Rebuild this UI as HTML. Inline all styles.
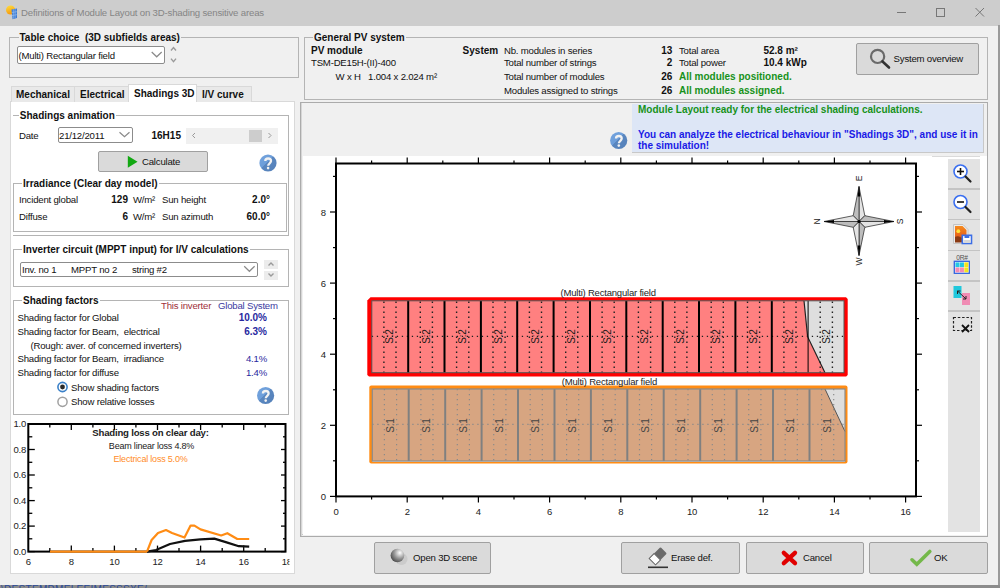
<!DOCTYPE html><html><head><meta charset="utf-8"><title>PV</title><style>
*{margin:0;padding:0;box-sizing:border-box}
html,body{width:1000px;height:588px;overflow:hidden}
body{background:#f0f0f0;font-family:"Liberation Sans",sans-serif;font-size:9.6px;letter-spacing:-0.2px;color:#111;position:relative}
.a{position:absolute;white-space:pre}
.gt{font-weight:bold;font-size:10px;color:#111;background:#f0f0f0;letter-spacing:0}
.w .gt{background:#fff}
.b{font-weight:bold;letter-spacing:0}
.btn{position:absolute;background:#dadada;border:1px solid #a0a0a0;border-radius:2px}
svg{position:absolute;left:0;top:0}
</style></head><body>
<div class="a" style="left:0px;top:0px;width:1000px;height:25.6px;background:#cdcdcd"></div>
<div class="a " style="left:21px;top:7.0px;line-height:12px;font-size:9.6px;color:#858585;letter-spacing:-0.17px">Definitions of Module Layout on 3D-shading sensitive areas</div>
<div class="a" style="left:0px;top:585px;width:1000px;height:3px;background:#8c8c8c"></div>
<div class="a" style="left:0;top:585px;width:150px;height:3px;overflow:hidden"><div class="a" style="left:1px;top:-1px;font-size:10px;line-height:12px;color:#2a4a9a;letter-spacing:0.3px">\DESTEMDMELEEIMESSSXE/.11.tdd</div></div>
<div class="a" style="left:998px;top:25px;width:2px;height:560px;background:#9a9a9a"></div>
<div class="a" style="left:9px;top:37px;width:290px;height:41px;border:1px solid #b4b4b4;"></div>
<div class="a gt" style="left:18.5px;top:31.5px;line-height:12px;padding:0 1px">Table choice  (3D subfields areas)</div>
<div class="a" style="left:17px;top:46px;width:148px;height:18px;background:#fff;border:1px solid #8c8c8c;border-radius:2px"></div>
<div class="a " style="left:18.5px;top:49.5px;line-height:12px;">(Multi) Rectangular field</div>
<div class="a" style="left:10px;top:101px;width:285px;height:473px;background:#fff;border:1px solid #d9d9d9"></div>
<div class="a" style="left:11px;top:86px;width:64px;height:16px;background:#e9e9e9;border:1px solid #d9d9d9;border-bottom:none"></div>
<div class="a" style="left:74px;top:86px;width:55px;height:16px;background:#e9e9e9;border:1px solid #d9d9d9;border-bottom:none"></div>
<div class="a" style="left:196px;top:86px;width:56px;height:16px;background:#e9e9e9;border:1px solid #d9d9d9;border-bottom:none"></div>
<div class="a" style="left:128px;top:84px;width:69px;height:18px;background:#fff;border:1px solid #d9d9d9;border-bottom:none"></div>
<div class="a b" style="left:16px;top:88.5px;line-height:12px;font-size:10px">Mechanical</div>
<div class="a b" style="left:80px;top:88.5px;line-height:12px;font-size:10px">Electrical</div>
<div class="a b" style="left:134px;top:87.8px;line-height:12px;font-size:10px">Shadings 3D</div>
<div class="a b" style="left:202px;top:88.5px;line-height:12px;font-size:10px">I/V curve</div>
<div class="w">
<div class="a" style="left:13px;top:115px;width:276px;height:121px;border:1px solid #b4b4b4;border-left:none;"></div>
<div class="a gt" style="left:18.8px;top:109.5px;line-height:12px;padding:0 1px">Shadings animation</div>
<div class="a " style="left:19px;top:129.5px;line-height:12px;">Date</div>
<div class="a" style="left:58px;top:127px;width:75px;height:16px;background:#fff;border:1px solid #8c8c8c;border-radius:2px"></div>
<div class="a " style="left:59px;top:129.5px;line-height:12px;">21/12/2011</div>
<div class="a b" style="left:151.5px;top:129.5px;line-height:12px;font-size:10px">16H15</div>
<div class="a" style="left:186px;top:128px;width:92px;height:16px;background:#f0f0f0"></div>
<div class="a" style="left:249px;top:130px;width:13px;height:12px;background:#cdcdcd"></div>
<div class="btn" style="left:98px;top:151px;width:110px;height:21px"></div>
<div class="a " style="left:142px;top:155.8px;line-height:12px;">Calculate</div>
<div class="a" style="left:13px;top:183px;width:274px;height:49px;border:1px solid #b4b4b4;"></div>
<div class="a gt" style="left:22px;top:177.5px;line-height:12px;padding:0 1px">Irradiance (Clear day model)</div>
<div class="a " style="left:19px;top:194.0px;line-height:12px;">Incident global</div>
<div class="a " style="left:19px;top:211.0px;line-height:12px;">Diffuse</div>
<div class="a b" style="right:872px;top:194.0px;line-height:12px;font-size:10px">129</div>
<div class="a b" style="right:872px;top:211.0px;line-height:12px;font-size:10px">6</div>
<div class="a " style="left:133px;top:194.0px;line-height:12px;">W/m²</div>
<div class="a " style="left:133px;top:211.0px;line-height:12px;">W/m²</div>
<div class="a " style="left:162px;top:194.0px;line-height:12px;">Sun height</div>
<div class="a " style="left:162px;top:211.0px;line-height:12px;">Sun azimuth</div>
<div class="a b" style="right:730px;top:194.0px;line-height:12px;font-size:10px">2.0°</div>
<div class="a b" style="right:730px;top:211.0px;line-height:12px;font-size:10px">60.0°</div>
<div class="a" style="left:13px;top:249px;width:276px;height:38px;border:1px solid #b4b4b4;"></div>
<div class="a gt" style="left:22px;top:243.5px;line-height:12px;padding:0 1px">Inverter circuit (MPPT input) for I/V calculations</div>
<div class="a" style="left:20px;top:262px;width:237.5px;height:15px;background:#fff;border:1px solid #8c8c8c;border-radius:2px"></div>
<div class="a " style="left:22px;top:264.0px;line-height:12px;">Inv. no 1      MPPT no 2      string #2</div>
<div class="a" style="left:264px;top:259.6px;width:14px;height:9.199999999999989px;background:#ececec"></div>
<div class="a" style="left:264px;top:271px;width:14px;height:9.300000000000011px;background:#ececec"></div>
<div class="a" style="left:13px;top:300px;width:276px;height:115px;border:1px solid #b4b4b4;"></div>
<div class="a gt" style="left:22px;top:294.5px;line-height:12px;padding:0 1px">Shading factors</div>
<div class="a " style="left:161px;top:300.0px;line-height:12px;color:#a0303a">This inverter</div>
<div class="a " style="left:218px;top:300.0px;line-height:12px;color:#3a3aa0">Global System</div>
<div class="a " style="left:17.5px;top:312.0px;line-height:12px;">Shading factor for Global</div>
<div class="a b" style="right:733px;top:312.0px;line-height:12px;font-size:10px;color:#2828a0">10.0%</div>
<div class="a " style="left:17.5px;top:325.6px;line-height:12px;">Shading factor for Beam,  electrical</div>
<div class="a b" style="right:733px;top:325.6px;line-height:12px;font-size:10px;color:#2828a0">6.3%</div>
<div class="a " style="left:30.5px;top:339.7px;line-height:12px;">(Rough: aver. of concerned inverters)</div>
<div class="a " style="left:17.5px;top:353.0px;line-height:12px;">Shading factor for Beam,  irradiance</div>
<div class="a " style="right:733px;top:353.0px;line-height:12px;color:#2828a0">4.1%</div>
<div class="a " style="left:17.5px;top:366.5px;line-height:12px;">Shading factor for diffuse</div>
<div class="a " style="right:733px;top:366.5px;line-height:12px;color:#2828a0">1.4%</div>
<div class="a " style="left:71px;top:382.0px;line-height:12px;">Show shading factors</div>
<div class="a " style="left:71px;top:396.2px;line-height:12px;">Show relative losses</div>
</div>
<div class="a" style="left:304px;top:37px;width:684px;height:63px;border:1px solid #b4b4b4;"></div>
<div class="a gt" style="left:313px;top:31.5px;line-height:12px;padding:0 1px">General PV system</div>
<div class="a b" style="left:311px;top:44.7px;line-height:12px;font-size:10px">PV module</div>
<div class="a " style="left:311px;top:57.3px;line-height:12px;">TSM-DE15H-(II)-400</div>
<div class="a " style="left:335.6px;top:70.8px;line-height:12px;">W x H   1.004 x 2.024 m²</div>
<div class="a b" style="left:462.6px;top:44.7px;line-height:12px;font-size:10px">System</div>
<div class="a " style="left:504px;top:44.7px;line-height:12px;">Nb. modules in series</div>
<div class="a " style="left:504px;top:57.3px;line-height:12px;">Total number of strings</div>
<div class="a " style="left:504px;top:70.8px;line-height:12px;">Total number of modules</div>
<div class="a " style="left:504px;top:84.5px;line-height:12px;">Modules assigned to strings</div>
<div class="a b" style="right:327.70000000000005px;top:44.7px;line-height:12px;font-size:10px">13</div>
<div class="a b" style="right:327.70000000000005px;top:57.3px;line-height:12px;font-size:10px">2</div>
<div class="a b" style="right:327.70000000000005px;top:70.8px;line-height:12px;font-size:10px">26</div>
<div class="a b" style="right:327.70000000000005px;top:84.5px;line-height:12px;font-size:10px">26</div>
<div class="a " style="left:679px;top:44.7px;line-height:12px;">Total area</div>
<div class="a " style="left:679px;top:57.3px;line-height:12px;">Total power</div>
<div class="a b" style="left:679px;top:70.8px;line-height:12px;font-size:10px;color:#17921a">All modules positioned.</div>
<div class="a b" style="left:679px;top:84.5px;line-height:12px;font-size:10px;color:#17921a">All modules assigned.</div>
<div class="a b" style="left:763.4px;top:44.7px;line-height:12px;font-size:10px">52.8 m²</div>
<div class="a b" style="left:763.4px;top:57.3px;line-height:12px;font-size:10px">10.4 kWp</div>
<div class="btn" style="left:856px;top:43px;width:123px;height:32px"></div>
<div class="a " style="left:893.6px;top:53.0px;line-height:12px;">System overview</div>
<div class="a" style="left:300px;top:102px;width:688px;height:435px;border:1px solid #ababab;background:#f0f0f0"></div>
<div class="a" style="left:302px;top:534px;width:685px;height:1px;background:#c8c8c8"></div>
<div class="a" style="left:301px;top:103px;width:1px;height:433px;background:#d6d6d6"></div>
<div class="a" style="left:302.5px;top:156px;width:684.5px;height:379px;background:#fff"></div>
<div class="a" style="left:632px;top:103.5px;width:352px;height:49.0px;background:#dde6f6;border-right:1px solid #c8c8c8;border-bottom:1px solid #c8c8c8"></div>
<div class="a b" style="left:638px;top:104.0px;line-height:12px;font-size:10px;color:#17921a">Module Layout ready for the electrical shading calculations.</div>
<div class="a b" style="left:638px;top:129.0px;line-height:12px;font-size:10px;color:#1a1ae6">You can analyze the electrical behaviour in "Shadings 3D", and use it in</div>
<div class="a b" style="left:638px;top:139.6px;line-height:12px;font-size:10px;color:#1a1ae6">the simulation!</div>
<div class="a" style="left:932px;top:155.5px;width:48px;height:1.0px;background:#dadada"></div>
<div class="a" style="left:947.5px;top:158.6px;width:32.5px;height:373.4px;background:#e3e3e3"></div>
<div class="a" style="left:947.5px;top:188px;width:32.5px;height:1.5999999999999943px;background:#c4c4c4"></div>
<div class="a" style="left:947.5px;top:218.5px;width:32.5px;height:1.5999999999999943px;background:#c4c4c4"></div>
<div class="a" style="left:947.5px;top:249.5px;width:32.5px;height:1.5999999999999943px;background:#c4c4c4"></div>
<div class="a" style="left:947.5px;top:280px;width:32.5px;height:1.6000000000000227px;background:#c4c4c4"></div>
<div class="a" style="left:947.5px;top:310px;width:32.5px;height:1.6000000000000227px;background:#c4c4c4"></div>
<div class="btn" style="left:373.6px;top:542px;width:117.9px;height:31.5px"></div>
<div class="a " style="left:413px;top:552.0px;line-height:12px;">Open 3D scene</div>
<div class="btn" style="left:621.4px;top:542px;width:118.2px;height:31.5px"></div>
<div class="a " style="left:671px;top:552.0px;line-height:12px;">Erase def.</div>
<div class="btn" style="left:745.6px;top:542px;width:118.0px;height:31.5px"></div>
<div class="a " style="left:803px;top:552.0px;line-height:12px;">Cancel</div>
<div class="btn" style="left:869.4px;top:542px;width:118.2px;height:31.5px"></div>
<div class="a " style="left:934px;top:552.0px;line-height:12px;">OK</div>
<svg width="1000" height="588" viewBox="0 0 1000 588">
<defs><linearGradient id="hg" x1="0" y1="0" x2="1" y2="1"><stop offset="0" stop-color="#74a4de"/><stop offset="0.46" stop-color="#6c9dd9"/><stop offset="0.46" stop-color="#5a87c0"/><stop offset="1" stop-color="#5480b8"/></linearGradient><radialGradient id="sph" cx="0.68" cy="0.3" r="0.8"><stop offset="0" stop-color="#ffffff"/><stop offset="0.5" stop-color="#9a9a9a"/><stop offset="1" stop-color="#444"/></radialGradient><clipPath id="c18"><rect x="0" y="0" width="289.5" height="588"/></clipPath><linearGradient id="sun" x1="0" y1="0" x2="0.3" y2="1"><stop offset="0" stop-color="#ffe040"/><stop offset="1" stop-color="#f59a10"/></linearGradient><linearGradient id="sunset" x1="0" y1="0" x2="0" y2="1"><stop offset="0" stop-color="#f58a1e"/><stop offset="0.6" stop-color="#e8641a"/><stop offset="1" stop-color="#a04010"/></linearGradient></defs>
<polygon points="370.5,297.3 846,297.3 847.7,299 847.7,375 846.2,376.6 369,376.6 367.3,375 367.3,300.5" fill="#ff0000"/>
<rect x="371.8" y="300.8" width="472.2" height="71.9" fill="#ff8080"/>
<polygon points="804,300.8 807.6,336.7 825,372.7 844,372.7 844,300.8" fill="#dedede"/>
<polyline points="804,300.8 807.6,336.7 825,372.7" fill="none" stroke="#222" stroke-width="1.2"/>
<line x1="383.9" y1="300.8" x2="383.9" y2="372.7" stroke="#222" stroke-width="1.4" stroke-dasharray="1.5 3.5" stroke-dashoffset="-0.75"/>
<line x1="396.0" y1="300.8" x2="396.0" y2="372.7" stroke="#222" stroke-width="1.4" stroke-dasharray="1.5 3.5" stroke-dashoffset="-0.75"/>
<line x1="420.3" y1="300.8" x2="420.3" y2="372.7" stroke="#222" stroke-width="1.4" stroke-dasharray="1.5 3.5" stroke-dashoffset="-0.75"/>
<line x1="432.4" y1="300.8" x2="432.4" y2="372.7" stroke="#222" stroke-width="1.4" stroke-dasharray="1.5 3.5" stroke-dashoffset="-0.75"/>
<line x1="456.6" y1="300.8" x2="456.6" y2="372.7" stroke="#222" stroke-width="1.4" stroke-dasharray="1.5 3.5" stroke-dashoffset="-0.75"/>
<line x1="468.8" y1="300.8" x2="468.8" y2="372.7" stroke="#222" stroke-width="1.4" stroke-dasharray="1.5 3.5" stroke-dashoffset="-0.75"/>
<line x1="493.0" y1="300.8" x2="493.0" y2="372.7" stroke="#222" stroke-width="1.4" stroke-dasharray="1.5 3.5" stroke-dashoffset="-0.75"/>
<line x1="505.1" y1="300.8" x2="505.1" y2="372.7" stroke="#222" stroke-width="1.4" stroke-dasharray="1.5 3.5" stroke-dashoffset="-0.75"/>
<line x1="529.4" y1="300.8" x2="529.4" y2="372.7" stroke="#222" stroke-width="1.4" stroke-dasharray="1.5 3.5" stroke-dashoffset="-0.75"/>
<line x1="541.5" y1="300.8" x2="541.5" y2="372.7" stroke="#222" stroke-width="1.4" stroke-dasharray="1.5 3.5" stroke-dashoffset="-0.75"/>
<line x1="565.7" y1="300.8" x2="565.7" y2="372.7" stroke="#222" stroke-width="1.4" stroke-dasharray="1.5 3.5" stroke-dashoffset="-0.75"/>
<line x1="577.8" y1="300.8" x2="577.8" y2="372.7" stroke="#222" stroke-width="1.4" stroke-dasharray="1.5 3.5" stroke-dashoffset="-0.75"/>
<line x1="602.1" y1="300.8" x2="602.1" y2="372.7" stroke="#222" stroke-width="1.4" stroke-dasharray="1.5 3.5" stroke-dashoffset="-0.75"/>
<line x1="614.2" y1="300.8" x2="614.2" y2="372.7" stroke="#222" stroke-width="1.4" stroke-dasharray="1.5 3.5" stroke-dashoffset="-0.75"/>
<line x1="638.4" y1="300.8" x2="638.4" y2="372.7" stroke="#222" stroke-width="1.4" stroke-dasharray="1.5 3.5" stroke-dashoffset="-0.75"/>
<line x1="650.6" y1="300.8" x2="650.6" y2="372.7" stroke="#222" stroke-width="1.4" stroke-dasharray="1.5 3.5" stroke-dashoffset="-0.75"/>
<line x1="674.8" y1="300.8" x2="674.8" y2="372.7" stroke="#222" stroke-width="1.4" stroke-dasharray="1.5 3.5" stroke-dashoffset="-0.75"/>
<line x1="686.9" y1="300.8" x2="686.9" y2="372.7" stroke="#222" stroke-width="1.4" stroke-dasharray="1.5 3.5" stroke-dashoffset="-0.75"/>
<line x1="711.2" y1="300.8" x2="711.2" y2="372.7" stroke="#222" stroke-width="1.4" stroke-dasharray="1.5 3.5" stroke-dashoffset="-0.75"/>
<line x1="723.3" y1="300.8" x2="723.3" y2="372.7" stroke="#222" stroke-width="1.4" stroke-dasharray="1.5 3.5" stroke-dashoffset="-0.75"/>
<line x1="747.5" y1="300.8" x2="747.5" y2="372.7" stroke="#222" stroke-width="1.4" stroke-dasharray="1.5 3.5" stroke-dashoffset="-0.75"/>
<line x1="759.6" y1="300.8" x2="759.6" y2="372.7" stroke="#222" stroke-width="1.4" stroke-dasharray="1.5 3.5" stroke-dashoffset="-0.75"/>
<line x1="783.9" y1="300.8" x2="783.9" y2="372.7" stroke="#222" stroke-width="1.4" stroke-dasharray="1.5 3.5" stroke-dashoffset="-0.75"/>
<line x1="796.0" y1="300.8" x2="796.0" y2="372.7" stroke="#222" stroke-width="1.4" stroke-dasharray="1.5 3.5" stroke-dashoffset="-0.75"/>
<line x1="820.2" y1="300.8" x2="820.2" y2="372.7" stroke="#222" stroke-width="1.4" stroke-dasharray="1.5 3.5" stroke-dashoffset="-0.75"/>
<line x1="832.4" y1="300.8" x2="832.4" y2="372.7" stroke="#222" stroke-width="1.4" stroke-dasharray="1.5 3.5" stroke-dashoffset="-0.75"/>
<line x1="371.8" y1="336.3" x2="844" y2="336.3" stroke="#222" stroke-width="1.2" stroke-dasharray="1.3 3.7"/>
<line x1="408.2" y1="300.8" x2="408.2" y2="372.7" stroke="#000" stroke-width="2"/>
<line x1="444.5" y1="300.8" x2="444.5" y2="372.7" stroke="#000" stroke-width="2"/>
<line x1="480.9" y1="300.8" x2="480.9" y2="372.7" stroke="#000" stroke-width="2"/>
<line x1="517.2" y1="300.8" x2="517.2" y2="372.7" stroke="#000" stroke-width="2"/>
<line x1="553.6" y1="300.8" x2="553.6" y2="372.7" stroke="#000" stroke-width="2"/>
<line x1="590.0" y1="300.8" x2="590.0" y2="372.7" stroke="#000" stroke-width="2"/>
<line x1="626.3" y1="300.8" x2="626.3" y2="372.7" stroke="#000" stroke-width="2"/>
<line x1="662.7" y1="300.8" x2="662.7" y2="372.7" stroke="#000" stroke-width="2"/>
<line x1="699.0" y1="300.8" x2="699.0" y2="372.7" stroke="#000" stroke-width="2"/>
<line x1="735.4" y1="300.8" x2="735.4" y2="372.7" stroke="#000" stroke-width="2"/>
<line x1="771.8" y1="300.8" x2="771.8" y2="372.7" stroke="#000" stroke-width="2"/>
<line x1="808.1" y1="300.8" x2="808.1" y2="372.7" stroke="#000" stroke-width="1"/>
<rect x="371.8" y="300.8" width="472.2" height="71.9" fill="none" stroke="#555" stroke-width="1"/>
<text x="0" y="0" transform="translate(393.2,336.5) rotate(-90)" text-anchor="middle" font-family="Liberation Sans" font-size="10" fill="#1a1a1a">S:2</text>
<text x="0" y="0" transform="translate(429.5,336.5) rotate(-90)" text-anchor="middle" font-family="Liberation Sans" font-size="10" fill="#1a1a1a">S:2</text>
<text x="0" y="0" transform="translate(465.9,336.5) rotate(-90)" text-anchor="middle" font-family="Liberation Sans" font-size="10" fill="#1a1a1a">S:2</text>
<text x="0" y="0" transform="translate(502.3,336.5) rotate(-90)" text-anchor="middle" font-family="Liberation Sans" font-size="10" fill="#1a1a1a">S:2</text>
<text x="0" y="0" transform="translate(538.6,336.5) rotate(-90)" text-anchor="middle" font-family="Liberation Sans" font-size="10" fill="#1a1a1a">S:2</text>
<text x="0" y="0" transform="translate(575.0,336.5) rotate(-90)" text-anchor="middle" font-family="Liberation Sans" font-size="10" fill="#1a1a1a">S:2</text>
<text x="0" y="0" transform="translate(611.3,336.5) rotate(-90)" text-anchor="middle" font-family="Liberation Sans" font-size="10" fill="#1a1a1a">S:2</text>
<text x="0" y="0" transform="translate(647.7,336.5) rotate(-90)" text-anchor="middle" font-family="Liberation Sans" font-size="10" fill="#1a1a1a">S:2</text>
<text x="0" y="0" transform="translate(684.1,336.5) rotate(-90)" text-anchor="middle" font-family="Liberation Sans" font-size="10" fill="#1a1a1a">S:2</text>
<text x="0" y="0" transform="translate(720.4,336.5) rotate(-90)" text-anchor="middle" font-family="Liberation Sans" font-size="10" fill="#1a1a1a">S:2</text>
<text x="0" y="0" transform="translate(756.8,336.5) rotate(-90)" text-anchor="middle" font-family="Liberation Sans" font-size="10" fill="#1a1a1a">S:2</text>
<text x="0" y="0" transform="translate(793.1,336.5) rotate(-90)" text-anchor="middle" font-family="Liberation Sans" font-size="10" fill="#1a1a1a">S:2</text>
<text x="0" y="0" transform="translate(829.5,336.5) rotate(-90)" text-anchor="middle" font-family="Liberation Sans" font-size="10" fill="#1a1a1a">S:2</text>
<text x="608.2" y="296.4" text-anchor="middle" font-family="Liberation Sans" font-size="9.5" fill="#222">(Multi) Rectangular field</text>
<rect x="369.3" y="385.5" width="478.2" height="78" rx="2" fill="#ff8c14"/>
<rect x="372.3" y="389.0" width="472.7" height="73.0" fill="#dbdbdb"/>
<rect x="372.3" y="389.0" width="472.7" height="72.0" fill="#d7a581"/>
<polygon points="825,389.0 845,389.0 845,431.5" fill="#dedede"/>
<line x1="825" y1="389.0" x2="845" y2="431.5" stroke="#555" stroke-width="1"/>
<line x1="384.4" y1="389.0" x2="384.4" y2="461.0" stroke="#8a8a8a" stroke-width="1.2" stroke-dasharray="1.3 3.7"/>
<line x1="396.6" y1="389.0" x2="396.6" y2="461.0" stroke="#8a8a8a" stroke-width="1.2" stroke-dasharray="1.3 3.7"/>
<line x1="420.9" y1="389.0" x2="420.9" y2="461.0" stroke="#8a8a8a" stroke-width="1.2" stroke-dasharray="1.3 3.7"/>
<line x1="433.0" y1="389.0" x2="433.0" y2="461.0" stroke="#8a8a8a" stroke-width="1.2" stroke-dasharray="1.3 3.7"/>
<line x1="457.3" y1="389.0" x2="457.3" y2="461.0" stroke="#8a8a8a" stroke-width="1.2" stroke-dasharray="1.3 3.7"/>
<line x1="469.4" y1="389.0" x2="469.4" y2="461.0" stroke="#8a8a8a" stroke-width="1.2" stroke-dasharray="1.3 3.7"/>
<line x1="493.7" y1="389.0" x2="493.7" y2="461.0" stroke="#8a8a8a" stroke-width="1.2" stroke-dasharray="1.3 3.7"/>
<line x1="505.9" y1="389.0" x2="505.9" y2="461.0" stroke="#8a8a8a" stroke-width="1.2" stroke-dasharray="1.3 3.7"/>
<line x1="530.2" y1="389.0" x2="530.2" y2="461.0" stroke="#8a8a8a" stroke-width="1.2" stroke-dasharray="1.3 3.7"/>
<line x1="542.3" y1="389.0" x2="542.3" y2="461.0" stroke="#8a8a8a" stroke-width="1.2" stroke-dasharray="1.3 3.7"/>
<line x1="566.6" y1="389.0" x2="566.6" y2="461.0" stroke="#8a8a8a" stroke-width="1.2" stroke-dasharray="1.3 3.7"/>
<line x1="578.7" y1="389.0" x2="578.7" y2="461.0" stroke="#8a8a8a" stroke-width="1.2" stroke-dasharray="1.3 3.7"/>
<line x1="603.0" y1="389.0" x2="603.0" y2="461.0" stroke="#8a8a8a" stroke-width="1.2" stroke-dasharray="1.3 3.7"/>
<line x1="615.2" y1="389.0" x2="615.2" y2="461.0" stroke="#8a8a8a" stroke-width="1.2" stroke-dasharray="1.3 3.7"/>
<line x1="639.5" y1="389.0" x2="639.5" y2="461.0" stroke="#8a8a8a" stroke-width="1.2" stroke-dasharray="1.3 3.7"/>
<line x1="651.6" y1="389.0" x2="651.6" y2="461.0" stroke="#8a8a8a" stroke-width="1.2" stroke-dasharray="1.3 3.7"/>
<line x1="675.9" y1="389.0" x2="675.9" y2="461.0" stroke="#8a8a8a" stroke-width="1.2" stroke-dasharray="1.3 3.7"/>
<line x1="688.0" y1="389.0" x2="688.0" y2="461.0" stroke="#8a8a8a" stroke-width="1.2" stroke-dasharray="1.3 3.7"/>
<line x1="712.3" y1="389.0" x2="712.3" y2="461.0" stroke="#8a8a8a" stroke-width="1.2" stroke-dasharray="1.3 3.7"/>
<line x1="724.5" y1="389.0" x2="724.5" y2="461.0" stroke="#8a8a8a" stroke-width="1.2" stroke-dasharray="1.3 3.7"/>
<line x1="748.7" y1="389.0" x2="748.7" y2="461.0" stroke="#8a8a8a" stroke-width="1.2" stroke-dasharray="1.3 3.7"/>
<line x1="760.9" y1="389.0" x2="760.9" y2="461.0" stroke="#8a8a8a" stroke-width="1.2" stroke-dasharray="1.3 3.7"/>
<line x1="785.2" y1="389.0" x2="785.2" y2="461.0" stroke="#8a8a8a" stroke-width="1.2" stroke-dasharray="1.3 3.7"/>
<line x1="797.3" y1="389.0" x2="797.3" y2="461.0" stroke="#8a8a8a" stroke-width="1.2" stroke-dasharray="1.3 3.7"/>
<line x1="821.6" y1="389.0" x2="821.6" y2="461.0" stroke="#8a8a8a" stroke-width="1.2" stroke-dasharray="1.3 3.7"/>
<line x1="833.7" y1="389.0" x2="833.7" y2="461.0" stroke="#8a8a8a" stroke-width="1.2" stroke-dasharray="1.3 3.7"/>
<line x1="372.3" y1="424.3" x2="845" y2="424.3" stroke="#8a8a8a" stroke-width="1.2" stroke-dasharray="1.3 3.7"/>
<line x1="408.7" y1="389.0" x2="408.7" y2="461.0" stroke="#808080" stroke-width="2"/>
<line x1="445.2" y1="389.0" x2="445.2" y2="461.0" stroke="#808080" stroke-width="2"/>
<line x1="481.6" y1="389.0" x2="481.6" y2="461.0" stroke="#808080" stroke-width="2"/>
<line x1="518.0" y1="389.0" x2="518.0" y2="461.0" stroke="#808080" stroke-width="2"/>
<line x1="554.5" y1="389.0" x2="554.5" y2="461.0" stroke="#808080" stroke-width="2"/>
<line x1="590.9" y1="389.0" x2="590.9" y2="461.0" stroke="#808080" stroke-width="2"/>
<line x1="627.3" y1="389.0" x2="627.3" y2="461.0" stroke="#808080" stroke-width="2"/>
<line x1="663.7" y1="389.0" x2="663.7" y2="461.0" stroke="#808080" stroke-width="2"/>
<line x1="700.2" y1="389.0" x2="700.2" y2="461.0" stroke="#808080" stroke-width="2"/>
<line x1="736.6" y1="389.0" x2="736.6" y2="461.0" stroke="#808080" stroke-width="2"/>
<line x1="773.0" y1="389.0" x2="773.0" y2="461.0" stroke="#808080" stroke-width="2"/>
<line x1="809.5" y1="389.0" x2="809.5" y2="461.0" stroke="#808080" stroke-width="2"/>
<rect x="372.3" y="389.0" width="472.7" height="72.0" fill="none" stroke="#8a8a8a" stroke-width="1.2"/>
<text x="0" y="0" transform="translate(393.7,425.5) rotate(-90)" text-anchor="middle" font-family="Liberation Sans" font-size="10" fill="#444">S:1</text>
<text x="0" y="0" transform="translate(430.1,425.5) rotate(-90)" text-anchor="middle" font-family="Liberation Sans" font-size="10" fill="#444">S:1</text>
<text x="0" y="0" transform="translate(466.6,425.5) rotate(-90)" text-anchor="middle" font-family="Liberation Sans" font-size="10" fill="#444">S:1</text>
<text x="0" y="0" transform="translate(503.0,425.5) rotate(-90)" text-anchor="middle" font-family="Liberation Sans" font-size="10" fill="#444">S:1</text>
<text x="0" y="0" transform="translate(539.4,425.5) rotate(-90)" text-anchor="middle" font-family="Liberation Sans" font-size="10" fill="#444">S:1</text>
<text x="0" y="0" transform="translate(575.9,425.5) rotate(-90)" text-anchor="middle" font-family="Liberation Sans" font-size="10" fill="#444">S:1</text>
<text x="0" y="0" transform="translate(612.3,425.5) rotate(-90)" text-anchor="middle" font-family="Liberation Sans" font-size="10" fill="#444">S:1</text>
<text x="0" y="0" transform="translate(648.7,425.5) rotate(-90)" text-anchor="middle" font-family="Liberation Sans" font-size="10" fill="#444">S:1</text>
<text x="0" y="0" transform="translate(685.2,425.5) rotate(-90)" text-anchor="middle" font-family="Liberation Sans" font-size="10" fill="#444">S:1</text>
<text x="0" y="0" transform="translate(721.6,425.5) rotate(-90)" text-anchor="middle" font-family="Liberation Sans" font-size="10" fill="#444">S:1</text>
<text x="0" y="0" transform="translate(758.0,425.5) rotate(-90)" text-anchor="middle" font-family="Liberation Sans" font-size="10" fill="#444">S:1</text>
<text x="0" y="0" transform="translate(794.4,425.5) rotate(-90)" text-anchor="middle" font-family="Liberation Sans" font-size="10" fill="#444">S:1</text>
<text x="0" y="0" transform="translate(830.9,425.5) rotate(-90)" text-anchor="middle" font-family="Liberation Sans" font-size="10" fill="#444">S:1</text>
<text x="609.4" y="384.8" text-anchor="middle" font-family="Liberation Sans" font-size="9.5" fill="#222">(Multi) Rectangular field</text>
<rect x="336.0" y="163.5" width="580.0" height="332.9" fill="none" stroke="#000" stroke-width="2"/>
<line x1="336.0" y1="496.4" x2="336.0" y2="502.4" stroke="#000" stroke-width="1.2"/>
<line x1="336.0" y1="163.5" x2="336.0" y2="157.5" stroke="#000" stroke-width="1.2"/>
<text x="336.0" y="514.8" text-anchor="middle" font-family="Liberation Sans" font-size="9.5" fill="#222">0</text>
<line x1="371.6" y1="496.4" x2="371.6" y2="499.4" stroke="#000" stroke-width="1.2"/>
<line x1="371.6" y1="163.5" x2="371.6" y2="160.5" stroke="#000" stroke-width="1.2"/>
<line x1="407.2" y1="496.4" x2="407.2" y2="502.4" stroke="#000" stroke-width="1.2"/>
<line x1="407.2" y1="163.5" x2="407.2" y2="157.5" stroke="#000" stroke-width="1.2"/>
<text x="407.2" y="514.8" text-anchor="middle" font-family="Liberation Sans" font-size="9.5" fill="#222">2</text>
<line x1="442.8" y1="496.4" x2="442.8" y2="499.4" stroke="#000" stroke-width="1.2"/>
<line x1="442.8" y1="163.5" x2="442.8" y2="160.5" stroke="#000" stroke-width="1.2"/>
<line x1="478.4" y1="496.4" x2="478.4" y2="502.4" stroke="#000" stroke-width="1.2"/>
<line x1="478.4" y1="163.5" x2="478.4" y2="157.5" stroke="#000" stroke-width="1.2"/>
<text x="478.4" y="514.8" text-anchor="middle" font-family="Liberation Sans" font-size="9.5" fill="#222">4</text>
<line x1="514.0" y1="496.4" x2="514.0" y2="499.4" stroke="#000" stroke-width="1.2"/>
<line x1="514.0" y1="163.5" x2="514.0" y2="160.5" stroke="#000" stroke-width="1.2"/>
<line x1="549.6" y1="496.4" x2="549.6" y2="502.4" stroke="#000" stroke-width="1.2"/>
<line x1="549.6" y1="163.5" x2="549.6" y2="157.5" stroke="#000" stroke-width="1.2"/>
<text x="549.6" y="514.8" text-anchor="middle" font-family="Liberation Sans" font-size="9.5" fill="#222">6</text>
<line x1="585.2" y1="496.4" x2="585.2" y2="499.4" stroke="#000" stroke-width="1.2"/>
<line x1="585.2" y1="163.5" x2="585.2" y2="160.5" stroke="#000" stroke-width="1.2"/>
<line x1="620.8" y1="496.4" x2="620.8" y2="502.4" stroke="#000" stroke-width="1.2"/>
<line x1="620.8" y1="163.5" x2="620.8" y2="157.5" stroke="#000" stroke-width="1.2"/>
<text x="620.8" y="514.8" text-anchor="middle" font-family="Liberation Sans" font-size="9.5" fill="#222">8</text>
<line x1="656.4" y1="496.4" x2="656.4" y2="499.4" stroke="#000" stroke-width="1.2"/>
<line x1="656.4" y1="163.5" x2="656.4" y2="160.5" stroke="#000" stroke-width="1.2"/>
<line x1="692.0" y1="496.4" x2="692.0" y2="502.4" stroke="#000" stroke-width="1.2"/>
<line x1="692.0" y1="163.5" x2="692.0" y2="157.5" stroke="#000" stroke-width="1.2"/>
<text x="692.0" y="514.8" text-anchor="middle" font-family="Liberation Sans" font-size="9.5" fill="#222">10</text>
<line x1="727.6" y1="496.4" x2="727.6" y2="499.4" stroke="#000" stroke-width="1.2"/>
<line x1="727.6" y1="163.5" x2="727.6" y2="160.5" stroke="#000" stroke-width="1.2"/>
<line x1="763.2" y1="496.4" x2="763.2" y2="502.4" stroke="#000" stroke-width="1.2"/>
<line x1="763.2" y1="163.5" x2="763.2" y2="157.5" stroke="#000" stroke-width="1.2"/>
<text x="763.2" y="514.8" text-anchor="middle" font-family="Liberation Sans" font-size="9.5" fill="#222">12</text>
<line x1="798.8" y1="496.4" x2="798.8" y2="499.4" stroke="#000" stroke-width="1.2"/>
<line x1="798.8" y1="163.5" x2="798.8" y2="160.5" stroke="#000" stroke-width="1.2"/>
<line x1="834.4" y1="496.4" x2="834.4" y2="502.4" stroke="#000" stroke-width="1.2"/>
<line x1="834.4" y1="163.5" x2="834.4" y2="157.5" stroke="#000" stroke-width="1.2"/>
<text x="834.4" y="514.8" text-anchor="middle" font-family="Liberation Sans" font-size="9.5" fill="#222">14</text>
<line x1="870.0" y1="496.4" x2="870.0" y2="499.4" stroke="#000" stroke-width="1.2"/>
<line x1="870.0" y1="163.5" x2="870.0" y2="160.5" stroke="#000" stroke-width="1.2"/>
<line x1="905.6" y1="496.4" x2="905.6" y2="502.4" stroke="#000" stroke-width="1.2"/>
<line x1="905.6" y1="163.5" x2="905.6" y2="157.5" stroke="#000" stroke-width="1.2"/>
<text x="905.6" y="514.8" text-anchor="middle" font-family="Liberation Sans" font-size="9.5" fill="#222">16</text>
<line x1="336" y1="496.4" x2="330" y2="496.4" stroke="#000" stroke-width="1.2"/>
<line x1="916" y1="496.4" x2="922" y2="496.4" stroke="#000" stroke-width="1.2"/>
<text x="323.3" y="499.9" text-anchor="middle" font-family="Liberation Sans" font-size="9.5" fill="#222">0</text>
<line x1="336" y1="460.8" x2="333" y2="460.8" stroke="#000" stroke-width="1.2"/>
<line x1="916" y1="460.8" x2="919" y2="460.8" stroke="#000" stroke-width="1.2"/>
<line x1="336" y1="425.3" x2="330" y2="425.3" stroke="#000" stroke-width="1.2"/>
<line x1="916" y1="425.3" x2="922" y2="425.3" stroke="#000" stroke-width="1.2"/>
<text x="323.3" y="428.8" text-anchor="middle" font-family="Liberation Sans" font-size="9.5" fill="#222">2</text>
<line x1="336" y1="389.8" x2="333" y2="389.8" stroke="#000" stroke-width="1.2"/>
<line x1="916" y1="389.8" x2="919" y2="389.8" stroke="#000" stroke-width="1.2"/>
<line x1="336" y1="354.2" x2="330" y2="354.2" stroke="#000" stroke-width="1.2"/>
<line x1="916" y1="354.2" x2="922" y2="354.2" stroke="#000" stroke-width="1.2"/>
<text x="323.3" y="357.7" text-anchor="middle" font-family="Liberation Sans" font-size="9.5" fill="#222">4</text>
<line x1="336" y1="318.6" x2="333" y2="318.6" stroke="#000" stroke-width="1.2"/>
<line x1="916" y1="318.6" x2="919" y2="318.6" stroke="#000" stroke-width="1.2"/>
<line x1="336" y1="283.1" x2="330" y2="283.1" stroke="#000" stroke-width="1.2"/>
<line x1="916" y1="283.1" x2="922" y2="283.1" stroke="#000" stroke-width="1.2"/>
<text x="323.3" y="286.6" text-anchor="middle" font-family="Liberation Sans" font-size="9.5" fill="#222">6</text>
<line x1="336" y1="247.6" x2="333" y2="247.6" stroke="#000" stroke-width="1.2"/>
<line x1="916" y1="247.6" x2="919" y2="247.6" stroke="#000" stroke-width="1.2"/>
<line x1="336" y1="212.0" x2="330" y2="212.0" stroke="#000" stroke-width="1.2"/>
<line x1="916" y1="212.0" x2="922" y2="212.0" stroke="#000" stroke-width="1.2"/>
<text x="323.3" y="215.5" text-anchor="middle" font-family="Liberation Sans" font-size="9.5" fill="#222">8</text>
<line x1="336" y1="176.4" x2="333" y2="176.4" stroke="#000" stroke-width="1.2"/>
<line x1="916" y1="176.4" x2="919" y2="176.4" stroke="#000" stroke-width="1.2"/>
<polygon points="859,221.5 859,186.5 864.8,215.7" fill="#e4e4e4" stroke="#1a1a1a" stroke-width="0.7" stroke-linejoin="round"/>
<polygon points="859,221.5 859,186.5 853.2,215.7" fill="#bdbdbd" stroke="#1a1a1a" stroke-width="0.7" stroke-linejoin="round"/>
<polygon points="859,221.5 894,221.5 864.8,215.7" fill="#bdbdbd" stroke="#1a1a1a" stroke-width="0.7" stroke-linejoin="round"/>
<polygon points="859,221.5 894,221.5 864.8,227.3" fill="#e4e4e4" stroke="#1a1a1a" stroke-width="0.7" stroke-linejoin="round"/>
<polygon points="859,221.5 859,255.5 864.8,227.3" fill="#bdbdbd" stroke="#1a1a1a" stroke-width="0.7" stroke-linejoin="round"/>
<polygon points="859,221.5 859,255.5 853.2,227.3" fill="#e4e4e4" stroke="#1a1a1a" stroke-width="0.7" stroke-linejoin="round"/>
<polygon points="859,221.5 824,221.5 853.2,227.3" fill="#bdbdbd" stroke="#1a1a1a" stroke-width="0.7" stroke-linejoin="round"/>
<polygon points="859,221.5 824,221.5 853.2,215.7" fill="#e4e4e4" stroke="#1a1a1a" stroke-width="0.7" stroke-linejoin="round"/>
<polygon points="859,186.5 860.4,196.5 857.6,196.5" fill="#000"/>
<polygon points="859,255.5 860.4,245.5 857.6,245.5" fill="#000"/>
<polygon points="824,221.5 834,222.9 834,220.1" fill="#000"/>
<polygon points="894,221.5 884,222.9 884,220.1" fill="#000"/>
<circle cx="859" cy="221.5" r="1.6" fill="#000"/>
<text x="0" y="0" transform="translate(861.8,178.5) rotate(-90)" text-anchor="middle" font-family="Liberation Sans" font-size="8.5" fill="#222">E</text>
<text x="0" y="0" transform="translate(903.3,221.5) rotate(-90)" text-anchor="middle" font-family="Liberation Sans" font-size="8.5" fill="#222">S</text>
<text x="0" y="0" transform="translate(861.8,261.5) rotate(-90)" text-anchor="middle" font-family="Liberation Sans" font-size="8.5" fill="#222">W</text>
<text x="0" y="0" transform="translate(819.8,221.5) rotate(-90)" text-anchor="middle" font-family="Liberation Sans" font-size="8.5" fill="#222">N</text>
<rect x="28.3" y="424" width="257.2" height="127.6" fill="none" stroke="#000" stroke-width="2"/>
<line x1="28.3" y1="551.6" x2="34.8" y2="551.6" stroke="#000" stroke-width="1.3"/>
<line x1="285.5" y1="551.6" x2="281.0" y2="551.6" stroke="#000" stroke-width="1.3"/>
<text x="26" y="554.7" text-anchor="end" font-family="Liberation Sans" font-size="9.5" fill="#222">0.0</text>
<line x1="28.3" y1="538.8" x2="32.3" y2="538.8" stroke="#000" stroke-width="1.3"/>
<line x1="285.5" y1="538.8" x2="283.0" y2="538.8" stroke="#000" stroke-width="1.3"/>
<line x1="28.3" y1="526.1" x2="34.8" y2="526.1" stroke="#000" stroke-width="1.3"/>
<line x1="285.5" y1="526.1" x2="281.0" y2="526.1" stroke="#000" stroke-width="1.3"/>
<text x="26" y="529.2" text-anchor="end" font-family="Liberation Sans" font-size="9.5" fill="#222">0.2</text>
<line x1="28.3" y1="513.3" x2="32.3" y2="513.3" stroke="#000" stroke-width="1.3"/>
<line x1="285.5" y1="513.3" x2="283.0" y2="513.3" stroke="#000" stroke-width="1.3"/>
<line x1="28.3" y1="500.6" x2="34.8" y2="500.6" stroke="#000" stroke-width="1.3"/>
<line x1="285.5" y1="500.6" x2="281.0" y2="500.6" stroke="#000" stroke-width="1.3"/>
<text x="26" y="503.7" text-anchor="end" font-family="Liberation Sans" font-size="9.5" fill="#222">0.4</text>
<line x1="28.3" y1="487.8" x2="32.3" y2="487.8" stroke="#000" stroke-width="1.3"/>
<line x1="285.5" y1="487.8" x2="283.0" y2="487.8" stroke="#000" stroke-width="1.3"/>
<line x1="28.3" y1="475.0" x2="34.8" y2="475.0" stroke="#000" stroke-width="1.3"/>
<line x1="285.5" y1="475.0" x2="281.0" y2="475.0" stroke="#000" stroke-width="1.3"/>
<text x="26" y="478.1" text-anchor="end" font-family="Liberation Sans" font-size="9.5" fill="#222">0.6</text>
<line x1="28.3" y1="462.3" x2="32.3" y2="462.3" stroke="#000" stroke-width="1.3"/>
<line x1="285.5" y1="462.3" x2="283.0" y2="462.3" stroke="#000" stroke-width="1.3"/>
<line x1="28.3" y1="449.5" x2="34.8" y2="449.5" stroke="#000" stroke-width="1.3"/>
<line x1="285.5" y1="449.5" x2="281.0" y2="449.5" stroke="#000" stroke-width="1.3"/>
<text x="26" y="452.6" text-anchor="end" font-family="Liberation Sans" font-size="9.5" fill="#222">0.8</text>
<line x1="28.3" y1="436.8" x2="32.3" y2="436.8" stroke="#000" stroke-width="1.3"/>
<line x1="285.5" y1="436.8" x2="283.0" y2="436.8" stroke="#000" stroke-width="1.3"/>
<line x1="28.3" y1="424.0" x2="34.8" y2="424.0" stroke="#000" stroke-width="1.3"/>
<line x1="285.5" y1="424.0" x2="281.0" y2="424.0" stroke="#000" stroke-width="1.3"/>
<text x="26" y="427.1" text-anchor="end" font-family="Liberation Sans" font-size="9.5" fill="#222">1.0</text>
<text x="28.2" y="564.7" text-anchor="middle" font-family="Liberation Sans" font-size="9.5" fill="#222">6</text>
<line x1="49.8" y1="551.6" x2="49.8" y2="548.1" stroke="#000" stroke-width="1.3"/>
<line x1="49.8" y1="424" x2="49.8" y2="427.5" stroke="#000" stroke-width="1.3"/>
<line x1="71.3" y1="551.6" x2="71.3" y2="545.6" stroke="#000" stroke-width="1.3"/>
<line x1="71.3" y1="424" x2="71.3" y2="430" stroke="#000" stroke-width="1.3"/>
<text x="71.3" y="564.7" text-anchor="middle" font-family="Liberation Sans" font-size="9.5" fill="#222">8</text>
<line x1="92.9" y1="551.6" x2="92.9" y2="548.1" stroke="#000" stroke-width="1.3"/>
<line x1="92.9" y1="424" x2="92.9" y2="427.5" stroke="#000" stroke-width="1.3"/>
<line x1="114.4" y1="551.6" x2="114.4" y2="545.6" stroke="#000" stroke-width="1.3"/>
<line x1="114.4" y1="424" x2="114.4" y2="430" stroke="#000" stroke-width="1.3"/>
<text x="114.4" y="564.7" text-anchor="middle" font-family="Liberation Sans" font-size="9.5" fill="#222">10</text>
<line x1="135.9" y1="551.6" x2="135.9" y2="548.1" stroke="#000" stroke-width="1.3"/>
<line x1="135.9" y1="424" x2="135.9" y2="427.5" stroke="#000" stroke-width="1.3"/>
<line x1="157.5" y1="551.6" x2="157.5" y2="545.6" stroke="#000" stroke-width="1.3"/>
<line x1="157.5" y1="424" x2="157.5" y2="430" stroke="#000" stroke-width="1.3"/>
<text x="157.5" y="564.7" text-anchor="middle" font-family="Liberation Sans" font-size="9.5" fill="#222">12</text>
<line x1="179.0" y1="551.6" x2="179.0" y2="548.1" stroke="#000" stroke-width="1.3"/>
<line x1="179.0" y1="424" x2="179.0" y2="427.5" stroke="#000" stroke-width="1.3"/>
<line x1="200.6" y1="551.6" x2="200.6" y2="545.6" stroke="#000" stroke-width="1.3"/>
<line x1="200.6" y1="424" x2="200.6" y2="430" stroke="#000" stroke-width="1.3"/>
<text x="200.6" y="564.7" text-anchor="middle" font-family="Liberation Sans" font-size="9.5" fill="#222">14</text>
<line x1="222.2" y1="551.6" x2="222.2" y2="548.1" stroke="#000" stroke-width="1.3"/>
<line x1="222.2" y1="424" x2="222.2" y2="427.5" stroke="#000" stroke-width="1.3"/>
<line x1="243.7" y1="551.6" x2="243.7" y2="545.6" stroke="#000" stroke-width="1.3"/>
<line x1="243.7" y1="424" x2="243.7" y2="430" stroke="#000" stroke-width="1.3"/>
<text x="243.7" y="564.7" text-anchor="middle" font-family="Liberation Sans" font-size="9.5" fill="#222">16</text>
<line x1="265.2" y1="551.6" x2="265.2" y2="548.1" stroke="#000" stroke-width="1.3"/>
<line x1="265.2" y1="424" x2="265.2" y2="427.5" stroke="#000" stroke-width="1.3"/>
<text x="286.8" y="564.7" text-anchor="middle" font-family="Liberation Sans" font-size="9.5" fill="#222" clip-path="url(#c18)">18</text>
<polyline points="50,551.6 147,551.6" fill="none" stroke="#ff8c14" stroke-width="2.2"/>
<polyline points="147,551.6 156,550 170,544 185,540.9 200.5,539.3 214.3,538.6 226.6,542.4 238.8,546.2 249.2,546.7" fill="none" stroke="#111" stroke-width="2.2" stroke-linejoin="round"/>
<polyline points="147,551.6 151.6,540 158,533 166,530 172,533 184.5,537.5 190.6,525.6 194.4,525.6 200.5,529.4 221.2,535.5 227.3,533.2 237.3,539 249.2,539" fill="none" stroke="#ff8c14" stroke-width="2.2" stroke-linejoin="round"/>
<text x="150.5" y="436.1" text-anchor="middle" font-family="Liberation Sans" font-size="9.6" font-weight="bold" fill="#222">Shading loss on clear day:</text>
<text x="151.5" y="448.5" text-anchor="middle" font-family="Liberation Sans" font-size="9" fill="#222">Beam linear loss 4.8%</text>
<text x="150.5" y="461.6" text-anchor="middle" font-family="Liberation Sans" font-size="9" fill="#ff8c28">Electrical loss 5.0%</text>
<circle cx="268" cy="163" r="8.6" fill="url(#hg)"/>
<path d="M265.30,161.10 C265.30,157.60 271.00,157.60 271.00,161.10 C271.00,163.30 268.20,163.30 268.20,165.80" stroke="#f2f2f2" stroke-width="2.3" fill="none"/>
<circle cx="268.10" cy="168.10" r="1.3" fill="#f2f2f2"/>
<circle cx="265.6" cy="395.5" r="8.6" fill="url(#hg)"/>
<path d="M262.90,393.60 C262.90,390.10 268.60,390.10 268.60,393.60 C268.60,395.80 265.80,395.80 265.80,398.30" stroke="#f2f2f2" stroke-width="2.3" fill="none"/>
<circle cx="265.70" cy="400.60" r="1.3" fill="#f2f2f2"/>
<circle cx="618.7" cy="140.5" r="8.6" fill="url(#hg)"/>
<path d="M616.00,138.60 C616.00,135.10 621.70,135.10 621.70,138.60 C621.70,140.80 618.90,140.80 618.90,143.30" stroke="#f2f2f2" stroke-width="2.3" fill="none"/>
<circle cx="618.80" cy="145.60" r="1.3" fill="#f2f2f2"/>
<polyline points="151.7,52.0 156.7,56.8 161.7,52.0" fill="none" stroke="#8a8a8a" stroke-width="1.2"/>
<polyline points="119.5,132.25 124.5,136.75 129.5,132.25" fill="none" stroke="#8a8a8a" stroke-width="1.2"/>
<polyline points="244.20000000000002,266.3 249.4,271.3 254.6,266.3" fill="none" stroke="#8a8a8a" stroke-width="1.2"/>
<polyline points="171,50.5 173.5,47.5 176,50.5" fill="none" stroke="#9a9a9a" stroke-width="1.4"/>
<polyline points="171,58.6 173.5,61.6 176,58.6" fill="none" stroke="#9a9a9a" stroke-width="1.4"/>
<polyline points="268.5,265.5 271,263 273.5,265.5" fill="none" stroke="#9a9a9a" stroke-width="1.4"/>
<polyline points="268.5,273.4 271,275.9 273.5,273.4" fill="none" stroke="#9a9a9a" stroke-width="1.4"/>
<polyline points="195,133 192.5,135.5 195,138" fill="none" stroke="#999" stroke-width="1"/>
<polyline points="268.5,133 271,135.5 268.5,138" fill="none" stroke="#999" stroke-width="1"/>
<polygon points="127.8,155.7 137.5,161.7 127.8,167.7" fill="#12a812"/>
<circle cx="62.5" cy="387" r="4.6" fill="#fff" stroke="#3a80c8" stroke-width="1.6"/><circle cx="62.5" cy="387" r="2.4" fill="#2a2a2a"/>
<circle cx="62.5" cy="401.8" r="4.6" fill="#fff" stroke="#a0a0a0" stroke-width="1.5"/>
<circle cx="877.6" cy="56.4" r="6.6" fill="none" stroke="#6a6a6a" stroke-width="2.2"/>
<line x1="882.5" y1="61.5" x2="889" y2="67.5" stroke="#333" stroke-width="2.6" stroke-linecap="round"/>
<circle cx="960.5" cy="171.5" r="6.5" fill="#fff" stroke="#3a6ff0" stroke-width="1.6"/>
<line x1="957.0" y1="171.5" x2="964.0" y2="171.5" stroke="#111" stroke-width="1.6"/>
<line x1="960.5" y1="168.0" x2="960.5" y2="175.0" stroke="#111" stroke-width="1.6"/>
<line x1="965.5" y1="176.5" x2="970.5" y2="181.5" stroke="#222" stroke-width="2.2" stroke-linecap="round"/>
<circle cx="960.5" cy="202" r="6.5" fill="#fff" stroke="#3a6ff0" stroke-width="1.6"/>
<line x1="957.0" y1="202" x2="964.0" y2="202" stroke="#111" stroke-width="1.6"/>
<line x1="965.5" y1="207" x2="970.5" y2="212" stroke="#222" stroke-width="2.2" stroke-linecap="round"/>
<path d="M953.5,224.5 h9.5 l5,5 v14 h-14.5 z" fill="#ececec" stroke="#c4c4c4" stroke-width="1"/>
<path d="M955,226 h7.5 l4,4 v12 h-11.5 z" fill="url(#sunset)"/>
<circle cx="958.3" cy="231.2" r="1.9" fill="#ffe23a"/>
<path d="M955,237 q3,-1.5 5,0 t6.5,0.5 v5 h-11.5 z" fill="#8a3a14"/>
<rect x="962.3" y="235.3" width="9.2" height="8.2" fill="#fff" stroke="#3c6ee6" stroke-width="1.6"/>
<rect x="964.5" y="235" width="4.8" height="3" fill="#3c6ee6"/><rect x="963.5" y="240" width="7" height="3" fill="#d8d8d8"/>
<text x="962" y="259.5" text-anchor="middle" font-family="Liberation Sans" font-size="6.6" fill="#505050">0R#</text>
<rect x="954.3" y="261.3" width="15" height="12" fill="#fff" stroke="#2f63e0" stroke-width="1.3"/>
<rect x="955.40" y="262.4" width="4.1" height="4.8" fill="#22c8e4"/>
<rect x="955.40" y="267.5" width="4.1" height="4.8" fill="#f28cb4"/>
<rect x="959.85" y="262.4" width="4.1" height="4.8" fill="#22c8e4"/>
<rect x="959.85" y="267.5" width="4.1" height="4.8" fill="#f28cb4"/>
<rect x="964.30" y="262.4" width="4.1" height="4.8" fill="#f2e41e"/>
<rect x="964.30" y="267.5" width="4.1" height="4.8" fill="#f2e41e"/>
<rect x="953.5" y="286" width="8" height="12" fill="#20c8dc"/><rect x="962" y="293" width="8" height="12" fill="#f08cb4"/>
<line x1="957.5" y1="291" x2="966" y2="299" stroke="#222" stroke-width="1"/><polyline points="957.5,294 957.5,291 960.5,291" fill="none" stroke="#222" stroke-width="1"/><polyline points="963,299 966,299 966,296" fill="none" stroke="#222" stroke-width="1"/>
<rect x="953.5" y="317.5" width="18" height="13" fill="none" stroke="#222" stroke-width="1.2" stroke-dasharray="2.5 1.8"/>
<line x1="962" y1="325" x2="969" y2="332" stroke="#111" stroke-width="1.8"/><line x1="969" y1="325" x2="962" y2="332" stroke="#111" stroke-width="1.8"/>
<circle cx="401.5" cy="559" r="6" fill="#c4c4c4" opacity="0.7"/>
<circle cx="397.4" cy="555.5" r="6.8" fill="url(#sph)"/>
<g transform="translate(658,556) rotate(-45)"><rect x="-8" y="-4.5" width="16" height="9" rx="1" fill="#6a6a6a"/><rect x="-8" y="-4.5" width="7" height="9" fill="#fff" stroke="#6a6a6a" stroke-width="1"/></g>
<rect x="648" y="566.5" width="20" height="1.6" fill="#333"/>
<path d="M783.8,552.8 L795,563.2 M795,552.8 L783.8,563.2" stroke="#e00000" stroke-width="4.3" stroke-linecap="round"/>
<polyline points="912,559.8 916.8,564.3 929.8,551.5" fill="none" stroke="#74b84a" stroke-width="3.6" stroke-linecap="round"/>
<circle cx="10.6" cy="10" r="4.6" fill="url(#sun)"/>
<path d="M11.5,9.5 l5.5,-1 v9.5 l-4.5,1.3 z" fill="#3d7bd4"/>
<path d="M13.3,9.2 v9.6 M15.1,8.9 v9.2 M11.8,12.5 l5.2,-0.8 M12,15.5 l5,-0.8" stroke="#9cc4f0" stroke-width="0.6"/>
<line x1="897" y1="12.5" x2="906" y2="12.5" stroke="#777" stroke-width="1"/>
<rect x="936.5" y="8.5" width="8" height="8" fill="none" stroke="#777" stroke-width="1"/>
<path d="M975.5,8 L984,16.5 M984,8 L975.5,16.5" stroke="#777" stroke-width="1"/>
</svg>
</body></html>
